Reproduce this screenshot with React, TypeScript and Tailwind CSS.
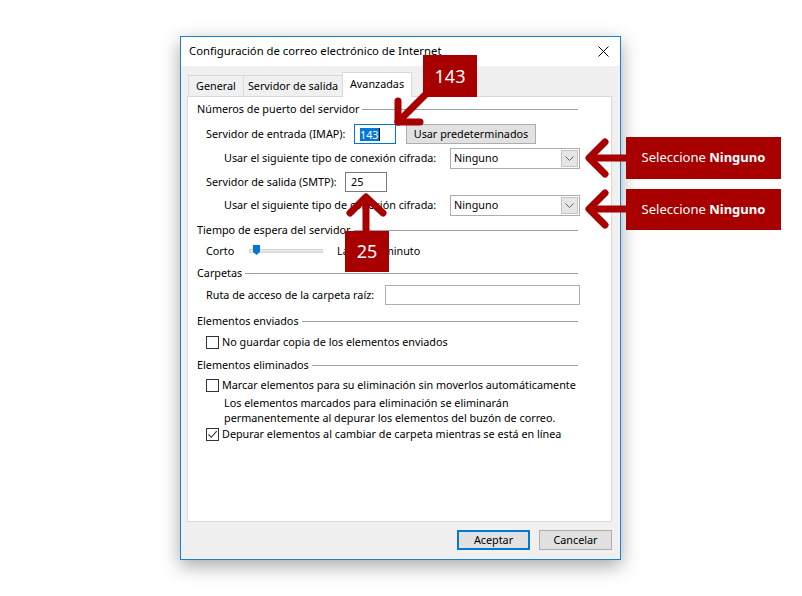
import React from "react";

const FONT = "font-['Noto_Sans','Segoe_UI',sans-serif]";

function GroupHeader({ title, className }: { title: string; className?: string }) {
  return (
    <div className={`flex h-[20px] items-center ${className ?? ""}`}>
      <span>{title}</span>
      <div className="ml-[3px] mr-[2px] h-px flex-1 bg-[#a0a0a0]" />
    </div>
  );
}

function Check({ checked }: { checked?: boolean }) {
  return (
    <span className="flex h-[13px] w-[13px] shrink-0 items-center justify-center border border-[#333] bg-white">
      {checked && (
        <svg width="11" height="11" viewBox="0 0 11 11">
          <path d="M1.5 5.5 L4.3 8.3 L9.7 2.2" fill="none" stroke="#333" strokeWidth="1.1" />
        </svg>
      )}
    </span>
  );
}

function Select() {
  return (
    <div className="flex h-[21px] w-[130px] items-center justify-between border border-[#acacac] bg-white pl-[3px] pr-px">
      <span>Ninguno</span>
      <span className="flex h-[17px] w-[17px] items-center justify-center border border-[#c4c4c4] bg-[#e6e6e6]">
        <svg width="9" height="5" viewBox="0 0 9 5">
          <path d="M0.5 0.5 L4.5 4.5 L8.5 0.5" fill="none" stroke="#606060" />
        </svg>
      </span>
    </div>
  );
}

function Callouts() {
  return (
    <>
      <svg className="pointer-events-none absolute left-0 top-0" width="802" height="596">
        <g fill="none" stroke="#a80000" strokeWidth="7" strokeLinecap="round" strokeLinejoin="round">
          <path d="M430 90 L398 122" />
          <path d="M398 101 L398 122 L420 122" />
          <path d="M366 198 L366 234" />
          <path d="M350 213 L366 197 L383 213" />
          <path d="M590 158 L628 158" />
          <path d="M605 142 L589 158 L605 174" />
          <path d="M590 209 L628 209" />
          <path d="M605 193 L589 209 L605 225" />
        </g>
      </svg>
      <div className="absolute left-[423px] top-[55px] flex h-[42px] w-[54px] items-center justify-center bg-[#a80000] text-[18px] text-white">
        143
      </div>
      <div className="absolute left-[345px] top-[231px] flex h-[41px] w-[44px] items-center justify-center bg-[#a80000] text-[18px] text-white">
        25
      </div>
      <div className="absolute left-[626px] top-[137px] flex h-[42px] w-[155px] items-center justify-center bg-[#a80000] text-[13px] text-white">
        Seleccione&nbsp;<b>Ninguno</b>
      </div>
      <div className="absolute left-[626px] top-[189px] flex h-[41px] w-[155px] items-center justify-center bg-[#a80000] text-[13px] text-white">
        Seleccione&nbsp;<b>Ninguno</b>
      </div>
    </>
  );
}

export default function App() {
  return (
    <div className={`relative h-[596px] w-[802px] overflow-hidden bg-white pl-[180px] pt-[36px] text-[10.8px] text-black ${FONT}`}>
      <div className="flex h-[524px] w-[441px] flex-col border border-[#1b7fd4] bg-[#f0f0f0] shadow-[0_6px_18px_rgba(0,0,0,0.35)]">
        {/* title bar */}
        <div className="flex h-[29px] shrink-0 items-center justify-between bg-white pl-[8px] pr-[11px] text-[11.3px]">
          <span>Configuración de correo electrónico de Internet</span>
          <svg width="11" height="11" viewBox="0 0 11 11">
            <path d="M0.5 0.5 L10.5 10.5 M10.5 0.5 L0.5 10.5" stroke="#000" strokeWidth="1" />
          </svg>
        </div>

        <div className="flex flex-1 flex-col pl-[6px] pr-[8px] pt-[6px]">
          {/* tabs */}
          <div className="flex h-[24px] items-end pl-px">
            <div className="flex h-[21px] w-[56px] items-center justify-center border border-b-0 border-[#d9d9d9]">General</div>
            <div className="-ml-px flex h-[21px] w-[100px] items-center justify-center border border-b-0 border-[#d9d9d9]">
              Servidor de salida
            </div>
            <div className="relative z-10 -mb-px -ml-px flex h-[25px] w-[70px] items-start justify-center border border-b-0 border-[#d9d9d9] bg-white pt-[3px]">
              Avanzadas
            </div>
          </div>

          {/* panel */}
          <div className="flex h-[426px] flex-col border border-[#d9d9d9] bg-white pl-[9px] pr-[31px]">
            <GroupHeader title="Números de puerto del servidor" className="mt-[2px]" />

            <div className="mt-[5px] flex h-[20px] items-center pl-[9px]">
              <span className="w-[148px]">Servidor de entrada (IMAP):</span>
              <div className="flex h-[20px] w-[42px] items-center border border-[#0078d7] bg-white pl-[5px]">
                <span className="bg-[#0078d7] leading-[13px] text-white">143</span>
                <span className="h-[13px] w-px bg-black" />
              </div>
              <div className="ml-[10px] flex h-[20px] w-[130px] items-center justify-center border border-[#adadad] bg-[#e1e1e1]">
                Usar predeterminados
              </div>
            </div>

            <div className="mt-[4px] flex h-[21px] items-center justify-between pl-[27px]">
              <span>Usar el siguiente tipo de conexión cifrada:</span>
              <Select />
            </div>

            <div className="mt-[3px] flex h-[20px] items-center pl-[9px]">
              <span className="w-[139px]">Servidor de salida (SMTP):</span>
              <div className="flex h-[20px] w-[42px] items-center border border-[#7a7a7a] bg-white pl-[5px]">25</div>
            </div>

            <div className="mt-[3px] flex h-[21px] items-center justify-between pl-[27px]">
              <span>Usar el siguiente tipo de conexión cifrada:</span>
              <Select />
            </div>

            <GroupHeader title="Tiempo de espera del servidor" className="mt-[4px]" />

            <div className="mt-px flex h-[20px] items-center pl-[9px]">
              <span className="w-[43px]">Corto</span>
              <div className="relative h-[4px] w-[74px] border border-[#d6d6d6] bg-[#e7e7e7]">
                <svg className="absolute left-[3px] top-[-5px]" width="7" height="10" viewBox="0 0 7 10">
                  <path d="M0 0 H7 V7 L3.5 10 L0 7 Z" fill="#0078d7" />
                </svg>
              </div>
              <span className="ml-[14px]">Largo&nbsp;&nbsp;&nbsp;1 minuto</span>
            </div>

            <GroupHeader title="Carpetas" className="mt-[2px]" />

            <div className="mt-[2px] flex h-[20px] items-center pl-[9px]">
              <span className="w-[179px]">Ruta de acceso de la carpeta raíz:</span>
              <div className="h-[20px] flex-1 border border-[#adadad] bg-white" />
            </div>

            <GroupHeader title="Elementos enviados" className="mt-[6px]" />

            <div className="mt-px flex h-[20px] items-center gap-[3px] pl-[9px]">
              <Check />
              <span>No guardar copia de los elementos enviados</span>
            </div>

            <GroupHeader title="Elementos eliminados" className="mt-[3px]" />

            <div className="flex h-[20px] items-center gap-[3px] whitespace-nowrap pl-[9px]">
              <Check />
              <span>Marcar elementos para su eliminación sin moverlos automáticamente</span>
            </div>

            <div className="pl-[27px] leading-[15px]">
              <div>Los elementos marcados para eliminación se eliminarán</div>
              <div>permanentemente al depurar los elementos del buzón de correo.</div>
            </div>

            <div className="flex h-[18px] items-center gap-[3px] whitespace-nowrap pl-[9px]">
              <Check checked />
              <span>Depurar elementos al cambiar de carpeta mientras se está en línea</span>
            </div>
          </div>

          {/* buttons */}
          <div className="mt-[8px] flex justify-end gap-[9px]">
            <div className="flex h-[20px] w-[73px] items-center justify-center border-2 border-[#0078d7] bg-[#e1e1e1]">Aceptar</div>
            <div className="flex h-[20px] w-[73px] items-center justify-center border border-[#adadad] bg-[#e1e1e1]">Cancelar</div>
          </div>
        </div>
      </div>

      <Callouts />
    </div>
  );
}
